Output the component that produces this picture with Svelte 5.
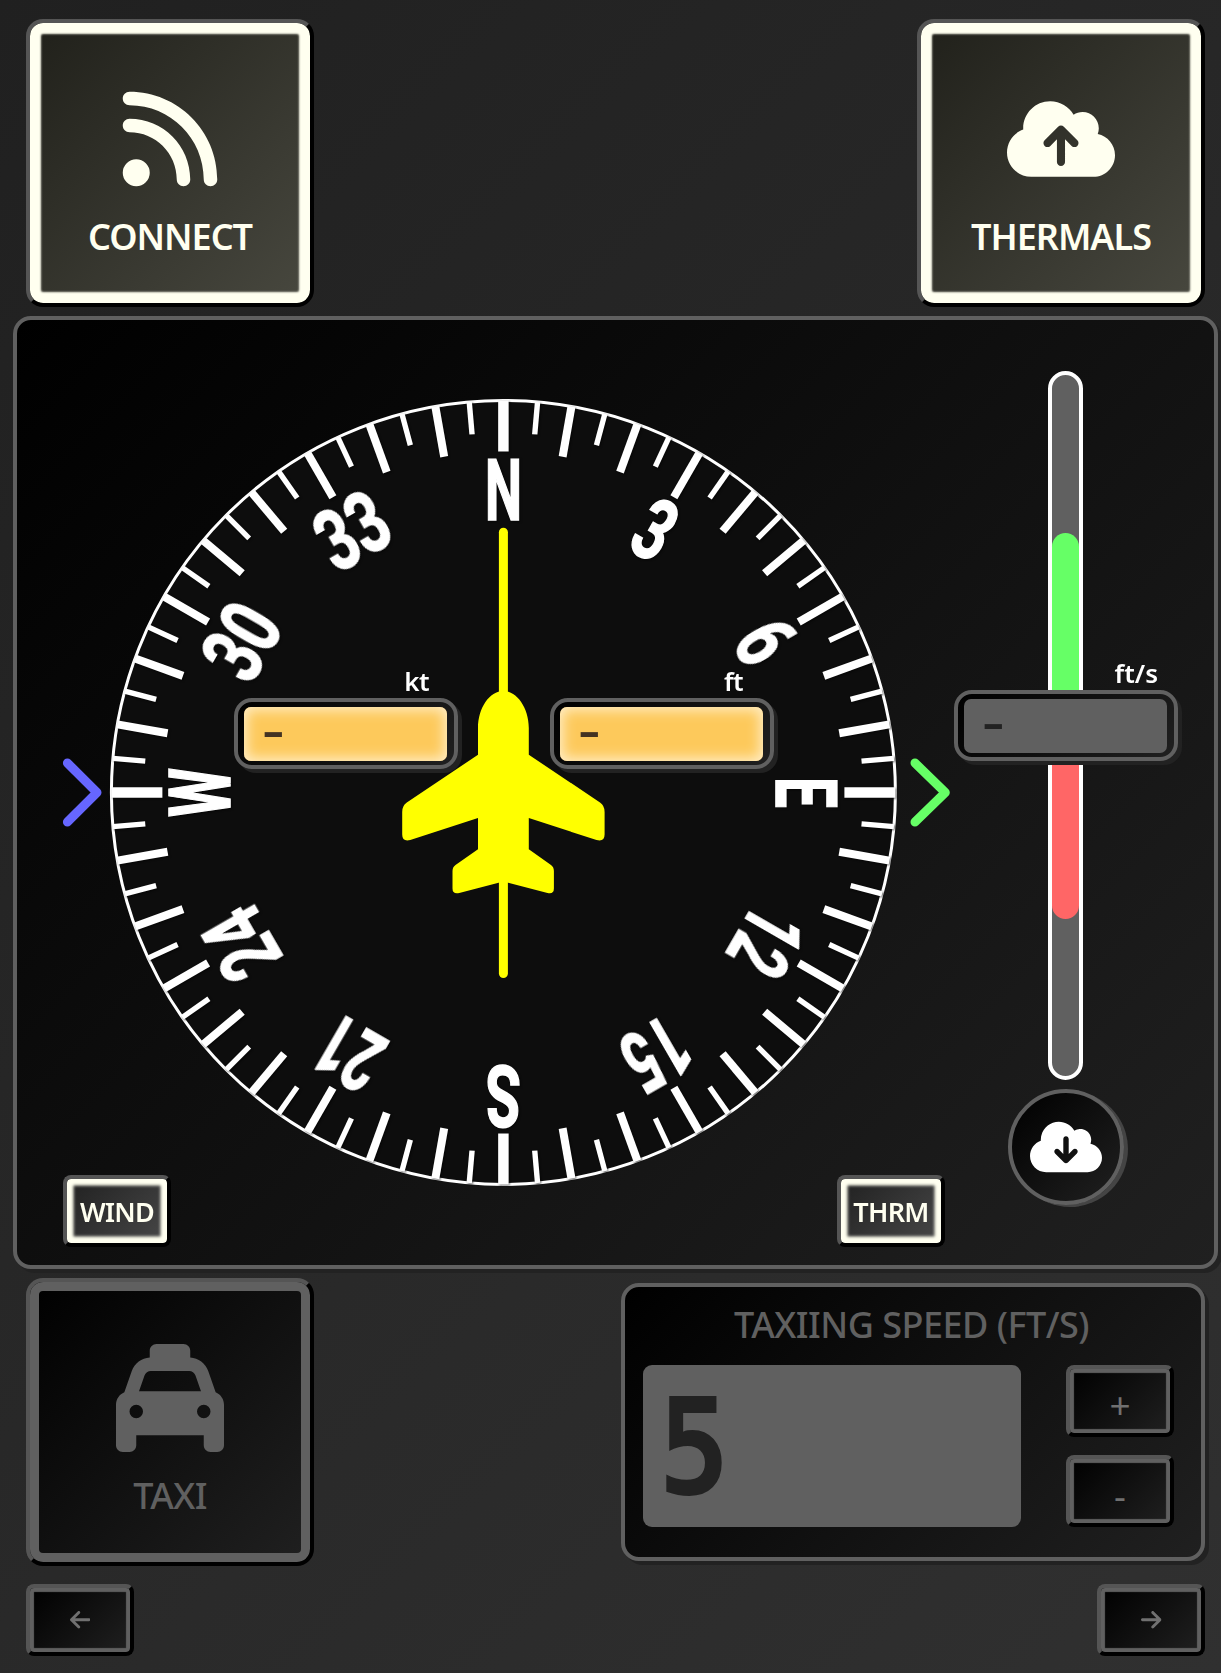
<script>
  const CX = 503.4;
  const CY = 792.5;

  const icons = {
    rss: {
      box: '0 0 448 512',
      d: 'M0 64C0 46.3 14.3 32 32 32c229.8 0 416 186.2 416 416c0 17.7-14.3 32-32 32s-32-14.3-32-32C384 253.6 226.4 96 32 96C14.3 96 0 81.7 0 64zM0 416a64 64 0 1 1 128 0A64 64 0 1 1 0 416zM32 160c159.1 0 288 128.9 288 288c0 17.7-14.3 32-32 32s-32-14.3-32-32c0-123.7-100.3-224-224-224c-17.7 0-32-14.3-32-32s14.3-32 32-32z'
    },
    cloudUp: {
      box: '0 0 640 512',
      d: 'M144 480C64.5 480 0 415.5 0 336c0-62.8 40.2-116.2 96.2-135.9c-.1-2.7-.2-5.4-.2-8.1c0-88.4 71.6-160 160-160c59.3 0 111 32.2 138.7 80.2C409.9 102 428.3 96 448 96c53 0 96 43 96 96c0 12.2-2.3 23.8-6.4 34.6C596 238.4 640 290.1 640 352c0 70.7-57.3 128-128 128H144zm79-217c-9.4 9.4-9.4 24.6 0 33.9s24.6 9.4 33.9 0l39-39V392c0 13.3 10.7 24 24 24s24-10.7 24-24V257.9l39 39c9.4 9.4 24.6 9.4 33.9 0s9.4-24.6 0-33.9l-80-80c-9.4-9.4-24.6-9.4-33.9 0l-80 80z'
    },
    cloudDown: {
      box: '0 0 640 512',
      d: 'M144 480C64.5 480 0 415.5 0 336c0-62.8 40.2-116.2 96.2-135.9c-.1-2.7-.2-5.4-.2-8.1c0-88.4 71.6-160 160-160c59.3 0 111 32.2 138.7 80.2C409.9 102 428.3 96 448 96c53 0 96 43 96 96c0 12.2-2.3 23.8-6.4 34.6C596 238.4 640 290.1 640 352c0 70.7-57.3 128-128 128H144zm79-167l80 80c9.4 9.4 24.6 9.4 33.9 0l80-80c9.4-9.4 9.4-24.6 0-33.9s-24.6-9.4-33.9 0l-39 39V184c0-13.3-10.7-24-24-24s-24 10.7-24 24V318.1l-39-39c-9.4-9.4-24.6-9.4-33.9 0s-9.4 24.6 0 33.9z'
    },
    taxi: {
      box: '0 0 512 512',
      d: 'M192 0c-17.7 0-32 14.3-32 32V64c0 .1 0 .1 0 .2c-38.6 2.2-72.3 27.3-85.2 64.1L39.6 228.8C16.4 238.4 0 261.3 0 288V432v48c0 17.7 14.3 32 32 32H64c17.7 0 32-14.3 32-32V432H416v48c0 17.7 14.3 32 32 32h32c17.7 0 32-14.3 32-32V432 288c0-26.7-16.4-49.6-39.6-59.2L437.2 128.3c-12.9-36.8-46.6-62-85.2-64.1c0-.1 0-.1 0-.2V32c0-17.7-14.3-32-32-32H192zM165.4 128H346.6c13.6 0 25.7 8.6 30.2 21.4L402.9 224H109.1l26.1-74.6c4.5-12.8 16.6-21.4 30.2-21.4zM96 288a32 32 0 1 1 0 64 32 32 0 1 1 0-64zm288 32a32 32 0 1 1 64 0 32 32 0 1 1 -64 0z'
    },
    arrowLeft: {
      box: '0 0 448 512',
      d: 'M9.4 233.4c-12.5 12.5-12.5 32.8 0 45.3l160 160c12.5 12.5 32.8 12.5 45.3 0s12.5-32.8 0-45.3L109.2 288 416 288c17.7 0 32-14.3 32-32s-14.3-32-32-32l-306.7 0L214.6 118.6c12.5-12.5 12.5-32.8 0-45.3s-32.8-12.5-45.3 0l-160 160z'
    }
  };

  const ticks = Array.from({ length: 72 }, (_, i) => {
    const deg = i * 5;
    if (deg % 90 === 0) return { deg, inner: 341, width: 10.5 };
    if (deg % 10 === 0) return { deg, inner: 341, width: 8 };
    return { deg, inner: 359.5, width: 5.4 };
  });

  // dx evens out the side bearing of the narrow "1"
  const labels = [
    { text: 'N', deg: 0, w: 37, dx: 0 },
    { text: '3', deg: 30, w: 34, dx: 0 },
    { text: '6', deg: 60, w: 34, dx: 0 },
    { text: 'E', deg: 90, w: 31, dx: 0 },
    { text: '12', deg: 120, w: 63, dx: -2 },
    { text: '15', deg: 150, w: 63, dx: -2 },
    { text: 'S', deg: 180, w: 35, dx: 0 },
    { text: '21', deg: 210, w: 63, dx: 3 },
    { text: '24', deg: 240, w: 67, dx: 0 },
    { text: 'W', deg: 270, w: 49, dx: 0 },
    { text: '30', deg: 300, w: 70, dx: 0 },
    { text: '33', deg: 330, w: 70, dx: 0 }
  ];
</script>

{#snippet icon(shape, cls)}
  <svg class={cls} viewBox={shape.box} fill="currentColor" aria-hidden="true"><path d={shape.d} /></svg>
{/snippet}

{#snippet readout(unit, off)}
  <div class="readout" class:off>
    <span class="unit">{unit}</span>
    <div class="lcd"><span class="dash">-</span></div>
  </div>
{/snippet}

<main>
  <header class="row">
    <button class="big lit">{@render icon(icons.rss, 'big-icon')}<span>CONNECT</span></button>
    <button class="big lit">{@render icon(icons.cloudUp, 'big-icon')}<span>THERMALS</span></button>
  </header>

  <section class="instrument">
    <div class="stage">
      <svg class="dial" viewBox="63 371 882 876" width="882" height="876">
        <circle cx={CX} cy={CY} r="392" fill="#0d0d0d" stroke="#fff" stroke-width="3" />
        <g class="marks">
          {#each ticks as t}
            <line
              x1={CX} x2={CX} y1={CY - 392} y2={CY - t.inner}
              stroke="#fff" stroke-width={t.width}
              transform="rotate({t.deg} {CX} {CY})"
            />
          {/each}
          {#each labels as l}
            <text
              x={CX + l.dx} y={CY - 273} textLength={l.w} lengthAdjust="spacingAndGlyphs"
              transform="rotate({l.deg} {CX} {CY})"
            >{l.text}</text>
          {/each}
        </g>
        <line x1={CX} x2={CX} y1="532.2" y2="973.6" stroke="#ff0" stroke-width="9" stroke-linecap="round" />
        <path
          fill="#ff0"
          d="M503.4 691C517 691 528.8 708 528.8 728V754.7L600 802.5Q604.6 805.5 604.6 812V834.5Q604.6 842 596.5 840L528.8 818V849.3L551 865Q553.9 867 553.9 871V888.5Q553.9 894.5 547.5 893L503.4 881.5L459.3 893Q452.5 894.5 452.5 888.5V871Q452.5 867 455.5 865L478 849.3V818L410.3 840Q402.2 842 402.2 834.5V812Q402.2 805.5 406.8 802.5L478 754.7V728C478 708 489.5 691 503.4 691Z"
        />
        <path class="chevron" stroke="#6666ff" d="M67.4 763L97 792.5L67.4 822" />
        <path class="chevron" stroke="#66ff66" d="M915 763L945.3 792.5L915 822" />
      </svg>
      <div class="readouts">
        {@render readout('kt', false)}
        {@render readout('ft', false)}
      </div>
      <div class="toggles">
        <button class="small lit">WIND</button>
        <button class="small lit">THRM</button>
      </div>
    </div>

    <div class="vario">
      <div class="gauge">
        <div class="tube"><i class="up"></i><i class="down"></i></div>
        {@render readout('ft/s', true)}
      </div>
      <div class="badge">{@render icon(icons.cloudDown, 'badge-icon')}</div>
    </div>
  </section>

  <section class="row mid">
    <button class="big">{@render icon(icons.taxi, 'big-icon')}<span>TAXI</span></button>
    <div class="speed">
      <h2>TAXIING SPEED (FT/S)</h2>
      <div class="speed-body">
        <div class="speed-lcd"><span>5</span></div>
        <div class="steps">
          <button class="small sign">+</button>
          <button class="small sign">-</button>
        </div>
      </div>
    </div>
  </section>

  <nav class="row">
    <button class="small">{@render icon(icons.arrowLeft, 'arrow')}</button>
    <button class="small">{@render icon(icons.arrowLeft, 'arrow flip')}</button>
  </nav>
</main>

<style>
  :global(body) { background: #262626; }
  main {
    box-sizing: border-box;
    width: 1221px;
    height: 1673px;
    padding-top: 19px;
    overflow: hidden;
    background: linear-gradient(135deg, #202020, #303030);
    font-family: 'Noto Sans', 'Open Sans', sans-serif;
    color: #fff;
  }
  .row {
    display: flex;
    justify-content: space-between;
    align-items: center;
    padding: 0 16px 0 26px;
  }
  button {
    box-sizing: border-box;
    display: flex;
    align-items: center;
    margin: 0;
    padding: 0;
    border: 4px solid;
    border-color: #555 #000 #000 #555;
    background: linear-gradient(135deg, #000, #202020);
    color: #606060;
    font-family: inherit;
  }
  .big {
    flex-direction: column;
    width: 288px;
    height: 288px;
    padding-top: 62px;
    border-radius: 17px;
    font-size: 36px;
    line-height: 48px;
    font-weight: 500;
    box-shadow: inset 0 0 0 9px #606060;
  }
  .big span { margin-top: 20px; letter-spacing: -0.6px; }
  .big-icon { width: 108px; height: 108px; }
  .big.lit {
    background: linear-gradient(135deg, #20201a, #48483f);
    box-shadow: inset 0 0 2px 11px #fffff0;
    color: #fffff0;
    font-weight: 600;
  }
  .big.lit span { letter-spacing: -1px; }
  .small {
    justify-content: center;
    width: 108px;
    height: 72px;
    border-radius: 8px;
    font-size: 27px;
    line-height: 36px;
    box-shadow: inset 0 0 1px 4px #606060;
    color: #707070;
  }
  .small.lit {
    padding-top: 2px;
    background: linear-gradient(135deg, #202020, #484848);
    box-shadow: inset 0 0 3px 6.5px #fffff0;
    color: #fffff0;
    font-weight: 600;
    letter-spacing: -0.7px;
  }
  .small.sign { padding-top: 7px; font-size: 37px; }
  .arrow { width: 20.5px; height: 23.5px; }
  :global(.flip) { transform: scaleX(-1); }
  .arrow, .big-icon, .badge-icon { display: block; }

  .instrument {
    box-sizing: border-box;
    display: flex;
    width: 1205px;
    height: 953px;
    margin: 9px 0 9px 13px;
    padding: 51px 36px 18px 46px;
    gap: 9px;
    border: 4px solid #606060;
    border-radius: 18px;
    background: linear-gradient(135deg, #000, #202020);
    box-shadow: 4px 4px 0 #222;
  }
  .stage { display: grid; width: 882px; height: 876px; }
  .stage > * { grid-area: 1 / 1; }
  .dial { display: block; overflow: visible; }
  .marks { filter: drop-shadow(1px 1px 1px rgba(0, 0, 0, 0.6)); }
  .marks text {
    font-family: Roboto, sans-serif;
    font-size: 86px;
    font-weight: 700;
    text-anchor: middle;
    fill: #fff;
    stroke: #fff;
    stroke-width: 1.6px;
  }
  .chevron { fill: none; stroke-width: 9; stroke-linecap: round; stroke-linejoin: round; }
  .readouts {
    display: flex;
    align-items: flex-start;
    gap: 92px;
    padding: 327px 0 0 171px;
  }
  .toggles { display: flex; align-items: flex-end; justify-content: space-between; }

  .readout {
    position: relative;
    box-sizing: border-box;
    width: 224px;
    height: 71px;
    padding: 5px 7px 4px 6px;
    border: 4px solid #606060;
    border-radius: 18px;
    background: linear-gradient(135deg, #000, #202020);
    box-shadow: 4px 4px 0 #222;
  }
  .unit {
    position: absolute;
    right: 25px;
    bottom: 67px;
    font-size: 26px;
    line-height: 34px;
    font-weight: 600;
    letter-spacing: -0.6px;
  }
  .readout:last-child .unit { right: 27px; }
  .readout.off .unit { right: 16px; letter-spacing: 0; }
  .lcd {
    display: flex;
    align-items: center;
    box-sizing: border-box;
    height: 54px;
    padding-left: 18px;
    border-radius: 7px;
    background: #fdc95b;
    box-shadow: inset 0 0 13px 3px #ffeec8;
    color: #443322;
  }
  .off .lcd { background: #606060; box-shadow: none; color: #222; }
  .dash {
    margin-top: -7px;
    font-family: 'Liberation Sans', sans-serif;
    font-weight: 700;
    font-size: 40px;
    line-height: 54px;
    transform: scaleX(1.7);
    transform-origin: left;
  }

  .vario { display: flex; flex-direction: column; align-items: center; width: 224px; }
  .gauge { display: grid; place-items: center; width: 224px; height: 709px; }
  .gauge > :global(*) { grid-area: 1 / 1; }
  .tube {
    box-sizing: border-box;
    display: flex;
    flex-direction: column;
    justify-content: center;
    width: 35px;
    height: 709px;
    margin-right: 1px;
    border: 4px solid #fff;
    border-radius: 18px;
    background: #606060;
  }
  .tube i { height: 193px; }
  .up { background: #66ff66; border-radius: 14px 14px 0 0; }
  .down { background: #ff6666; border-radius: 0 0 14px 14px; }
  .badge {
    box-sizing: border-box;
    display: grid;
    place-items: center;
    width: 116px;
    height: 116px;
    margin-top: 9px;
    border: 4px solid #606060;
    border-radius: 50%;
    background: linear-gradient(135deg, #000, #202020);
    box-shadow: 4px 2px 0 #444;
  }
  .badge-icon { width: 72px; height: 58px; }

  .speed {
    box-sizing: border-box;
    width: 584px;
    height: 278px;
    padding: 14px 27px 0 18px;
    border: 4px solid #606060;
    border-radius: 18px;
    background: linear-gradient(135deg, #000, #202020);
    box-shadow: 4px 4px 0 #222;
    color: #606060;
  }
  h2 {
    margin: 0 0 16px;
    padding-left: 6px;
    font-size: 36px;
    line-height: 48px;
    font-weight: 500;
    text-align: center;
    letter-spacing: -0.5px;
  }
  .speed-body { display: flex; justify-content: space-between; }
  .speed-lcd {
    box-sizing: border-box;
    width: 378px;
    height: 162px;
    padding: 2px 0 0 15px;
    border-radius: 9px;
    background: #606060;
    color: #222;
    font-family: 'DejaVu Sans Mono', monospace;
    font-weight: 700;
    font-size: 134px;
    line-height: 162px;
  }
  .speed-lcd span { display: inline-block; transform: scaleX(0.89); transform-origin: left; }
  .steps { display: flex; flex-direction: column; justify-content: space-between; }
  nav { margin-top: 18px; }
</style>
